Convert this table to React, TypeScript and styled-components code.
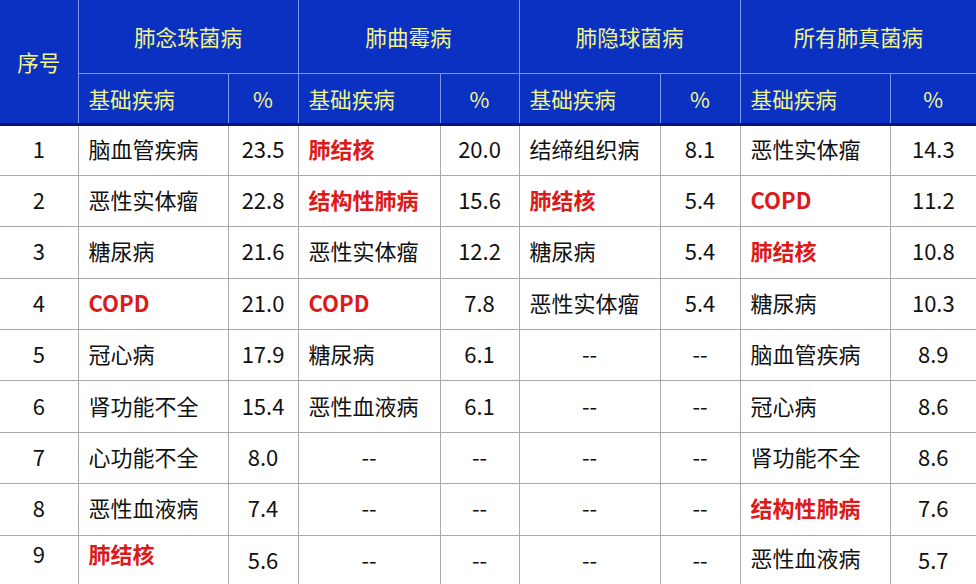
import React from "react";
import styled, { createGlobalStyle } from "styled-components";

const Global = createGlobalStyle`
  html, body { margin: 0; padding: 0; background: #fff; }
  body { font-family: "Microsoft YaHei", "Noto Sans CJK SC", "Noto Sans", sans-serif; overflow: hidden; }
`;

const Table = styled.table`
  width: 976px;
  table-layout: fixed;
  border-collapse: collapse;
  font-size: 22px;
`;

const HeadCell = styled.th<{ $align?: "left" | "center"; $bottom?: boolean }>`
  background: #0a31c2;
  color: #f2f58a;
  font-weight: 400;
  font-size: 21.6px;
  text-align: ${(p) => p.$align ?? "center"};
  padding: ${(p) => (p.$align === "left" ? "0 0 0 10px" : "0")};
  border: 1px solid #7e97ee;
  border-top: none;
  ${(p) => (p.$bottom ? "border-bottom: 3px solid #06167a;" : "")}
  vertical-align: middle;
`;

const HeadRow = styled.tr<{ $h: number }>`
  height: ${(p) => p.$h}px;
`;

const BodyRow = styled.tr`
  height: 51.4px;
`;

const Cell = styled.td<{ $align?: "left" | "center"; $red?: boolean; $raise?: number }>`
  border: 1px solid #a8a8b0;
  border-top: none;
  text-align: ${(p) => p.$align ?? "center"};
  padding: 0 0 ${(p) => 4 + (p.$raise ?? 0)}px ${(p) => (p.$align === "left" ? "10px" : "0")};
  color: ${(p) => (p.$red ? "#dc1a1a" : "#111")};
  font-weight: ${(p) => (p.$red ? 700 : 400)};
  vertical-align: middle;
  white-space: nowrap;
  overflow: hidden;
  &:first-child { border-left: none; }
  &:last-child { border-right: none; }
`;

type Item = [string, string] | null;

const groups = ["肺念珠菌病", "肺曲霉病", "肺隐球菌病", "所有肺真菌病"];
const widths = [78, 150, 70, 142, 79, 141, 80, 150, 86];

const red = new Set(["肺结核", "COPD", "结构性肺病"]);

const data: Item[][] = [
  [["脑血管疾病", "23.5"], ["肺结核", "20.0"], ["结缔组织病", "8.1"], ["恶性实体瘤", "14.3"]],
  [["恶性实体瘤", "22.8"], ["结构性肺病", "15.6"], ["肺结核", "5.4"], ["COPD", "11.2"]],
  [["糖尿病", "21.6"], ["恶性实体瘤", "12.2"], ["糖尿病", "5.4"], ["肺结核", "10.8"]],
  [["COPD", "21.0"], ["COPD", "7.8"], ["恶性实体瘤", "5.4"], ["糖尿病", "10.3"]],
  [["冠心病", "17.9"], ["糖尿病", "6.1"], null, ["脑血管疾病", "8.9"]],
  [["肾功能不全", "15.4"], ["恶性血液病", "6.1"], null, ["冠心病", "8.6"]],
  [["心功能不全", "8.0"], null, null, ["肾功能不全", "8.6"]],
  [["恶性血液病", "7.4"], null, null, ["结构性肺病", "7.6"]],
  [["肺结核", "5.6"], null, null, ["恶性血液病", "5.7"]],
];

export default function App() {
  const last = data.length - 1;
  return (
    <>
      <Global />
      <Table>
        <colgroup>
          {widths.map((w, i) => (
            <col key={i} style={{ width: w }} />
          ))}
        </colgroup>
        <thead>
          <HeadRow $h={73}>
            <HeadCell rowSpan={2} $bottom style={{ borderLeft: "none" }}>
              序号
            </HeadCell>
            {groups.map((g, i) => (
              <HeadCell key={g} colSpan={2} style={i === 3 ? { borderRight: "none" } : undefined}>
                {g}
              </HeadCell>
            ))}
          </HeadRow>
          <HeadRow $h={51}>
            {groups.map((g, i) => (
              <React.Fragment key={g}>
                <HeadCell $align="left" $bottom>
                  基础疾病
                </HeadCell>
                <HeadCell $bottom style={i === 3 ? { borderRight: "none" } : undefined}>
                  %
                </HeadCell>
              </React.Fragment>
            ))}
          </HeadRow>
        </thead>
        <tbody>
          {data.map((row, r) => (
            <BodyRow key={r}>
              <Cell $raise={r === last ? 12 : 0}>{r + 1}</Cell>
              {row.map((it, c) =>
                it ? (
                  <React.Fragment key={c}>
                    <Cell
                      $align="left"
                      $red={red.has(it[0])}
                      $raise={r === last && c === 0 ? 12 : r === last ? 4 : 0}
                    >
                      {it[0]}
                    </Cell>
                    <Cell>{it[1]}</Cell>
                  </React.Fragment>
                ) : (
                  <React.Fragment key={c}>
                    <Cell>--</Cell>
                    <Cell>--</Cell>
                  </React.Fragment>
                )
              )}
            </BodyRow>
          ))}
        </tbody>
      </Table>
    </>
  );
}
